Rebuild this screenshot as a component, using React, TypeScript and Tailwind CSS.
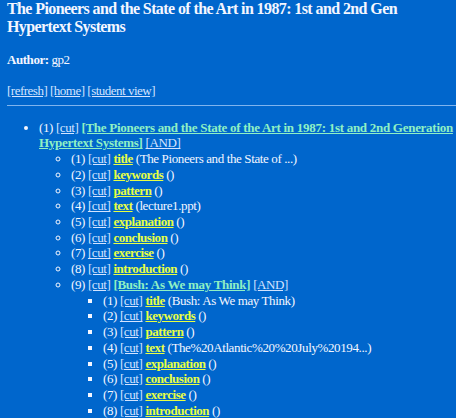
const fields = [
  { name: 'title', value: 'The Pioneers and the State of ...' },
  { name: 'keywords', value: '' },
  { name: 'pattern', value: '' },
  { name: 'text', value: 'lecture1.ppt' },
  { name: 'explanation', value: '' },
  { name: 'conclusion', value: '' },
  { name: 'exercise', value: '' },
  { name: 'introduction', value: '' },
]

const bushFields = [
  { name: 'title', value: 'Bush: As We may Think' },
  { name: 'keywords', value: '' },
  { name: 'pattern', value: '' },
  { name: 'text', value: 'The%20Atlantic%20%20July%20194...' },
  { name: 'explanation', value: '' },
  { name: 'conclusion', value: '' },
  { name: 'exercise', value: '' },
  { name: 'introduction', value: '' },
]

function Cut() {
  return <a href="#" className="text-[#d4e4ff] underline">[cut]</a>
}

function FieldItem({ n, name, value }: { n: number; name: string; value: string }) {
  return (
    <li>
      ({n}) <Cut />{' '}
      <a href="#" className="font-bold tracking-[-0.45px] text-[#e8ff44] underline">{name}</a> ({value})
    </li>
  )
}

export default function App() {
  return (
    <div className="min-h-screen overflow-hidden bg-[#0066cc] pl-[7px] text-[13px] leading-[15.72px] tracking-[-0.38px] text-[#f4f6ff] [font-family:'Liberation_Serif',serif]">
      <h2 className="text-[16px] font-bold leading-[18px] tracking-[-0.6px] whitespace-nowrap">
        The Pioneers and the State of the Art in 1987: 1st and 2nd Gen
        <br />
        Hypertext Systems
      </h2>

      <p className="mt-[16px] leading-[16px] tracking-[-0.45px]">
        <b>Author:</b> gp2
      </p>

      <p className="mt-[15px] tracking-[-0.5px] text-[#d4e4ff]">
        <a href="#" className="underline">[refresh]</a>{' '}
        <a href="#" className="underline">[home]</a>{' '}
        <a href="#" className="underline">[student view]</a>
      </p>

      <hr className="mt-[6px] border-t border-[#7fb4ee]" />

      <ul className="mt-[14px] list-disc pl-8 whitespace-nowrap">
        <li>
          (1) <Cut />{' '}
          <a href="#" className="font-bold tracking-[-0.28px] text-[#8ff0c4] underline">
            [The Pioneers and the State of the Art in 1987: 1st and 2nd Generation
            <br />
            Hypertext Systems]
          </a>{' '}
          <a href="#" className="text-[#d4e4ff] underline">[AND]</a>
          <ul className="list-[circle] pl-8">
            {fields.map((f, i) => (
              <FieldItem key={f.name} n={i + 1} name={f.name} value={f.value} />
            ))}
            <li>
              (9) <Cut />{' '}
              <a href="#" className="font-bold tracking-[-0.28px] text-[#8ff0c4] underline">[Bush: As We may Think]</a>{' '}
              <a href="#" className="text-[#d4e4ff] underline">[AND]</a>
              <ul className="list-[square] pl-8">
                {bushFields.map((f, i) => (
                  <FieldItem key={f.name} n={i + 1} name={f.name} value={f.value} />
                ))}
              </ul>
            </li>
          </ul>
        </li>
      </ul>
    </div>
  )
}
